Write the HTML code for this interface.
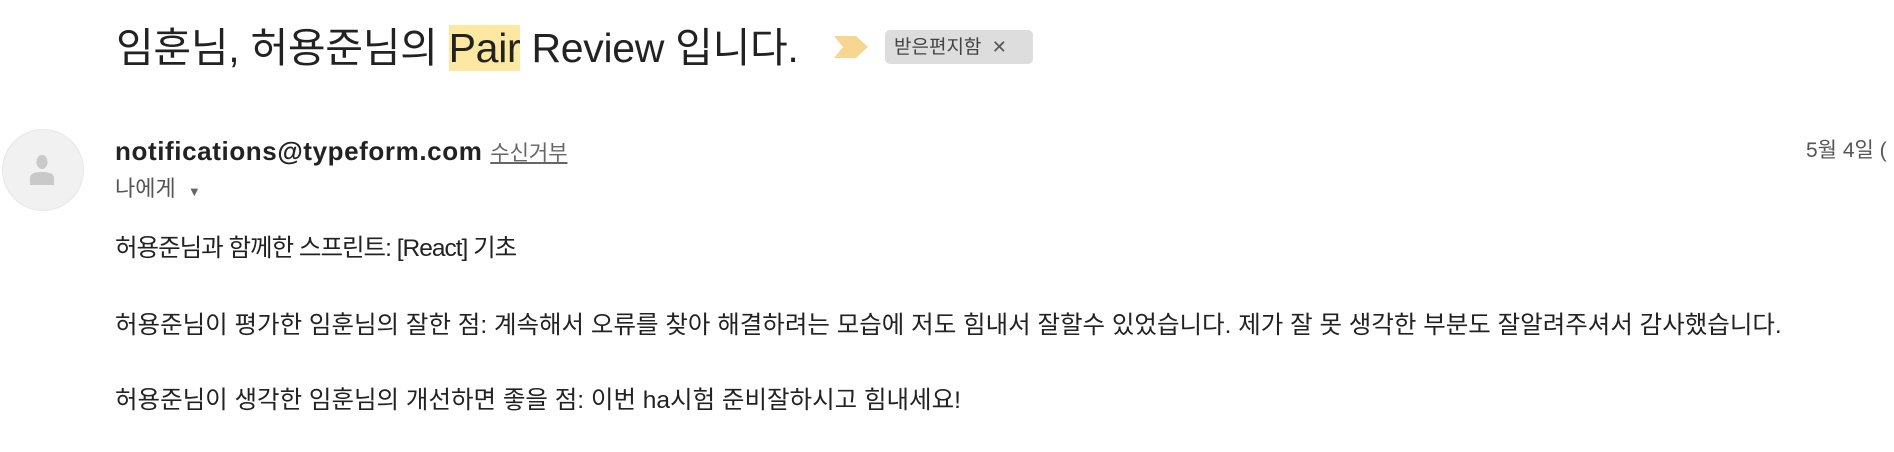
<!DOCTYPE html>
<html><head><meta charset="utf-8"><style>
body{margin:0;width:1894px;height:452px;background:#fff;overflow:hidden;position:relative;font-family:"Liberation Sans","Noto Sans CJK KR",sans-serif;color:#222}
.a{position:absolute;white-space:nowrap}
</style></head><body>
<div class="a" style="left:116px;top:16px;font-size:41px;line-height:64px;color:#222;letter-spacing:-0.3px">임훈님, 허용준님의 <span style="background:#fce8a0">Pair</span> Review 입니다.</div>
<svg class="a" style="left:834px;top:36px" width="34" height="22" viewBox="0 0 34 22"><path d="M0 0H22L34 11L22 22H0L9 11Z" fill="#f6d690"/></svg>
<div class="a" style="left:885px;top:30px;width:148px;height:34px;background:#ddd;border-radius:5px;font-size:19px;line-height:34px;color:#444;text-indent:9px">받은편지함 <span style="font-size:18px;color:#555;margin-left:5px">✕</span></div>
<div class="a" style="left:2px;top:129px;width:80px;height:80px;border-radius:50%;background:#f1f1f1;border:1px solid #e8e8e8"></div>
<svg class="a" style="left:26px;top:153px" width="32" height="32" viewBox="0 0 32 32"><ellipse cx="16" cy="9" rx="5.5" ry="7" fill="#c9c9c9"/><path d="M4 32V25C4 20 10 19 16 19S28 20 28 25V32Z" fill="#c9c9c9"/></svg>
<div class="a" style="left:115px;top:136px;font-size:26px;line-height:30px;font-weight:bold;color:#222;letter-spacing:0.6px">notifications@typeform.com <span style="font-weight:normal;font-size:21px;color:#666;text-decoration:underline;letter-spacing:0">수신거부</span></div>
<div class="a" style="left:115px;top:175px;font-size:22px;line-height:28px;color:#555">나에게 <span style="font-size:13px;color:#666;margin-left:6px">▼</span></div>
<div class="a" style="left:1806px;top:137px;font-size:21px;line-height:28px;color:#555">5월 4일 (</div>
<div class="a" style="left:115px;top:234px;font-size:24.5px;line-height:30px;color:#222;letter-spacing:-1px">허용준님과 함께한 스프린트: [React] 기초</div>
<div class="a" style="left:115px;top:311px;font-size:24.5px;line-height:30px;color:#222">허용준님이 평가한 임훈님의 잘한 점: 계속해서 오류를 찾아 해결하려는 모습에 저도 힘내서 잘할수 있었습니다. 제가 잘 못 생각한 부분도 잘알려주셔서 감사했습니다.</div>
<div class="a" style="left:115px;top:386px;font-size:24.5px;line-height:30px;color:#222">허용준님이 생각한 임훈님의 개선하면 좋을 점: 이번 ha시험 준비잘하시고 힘내세요!</div>
</body></html>
